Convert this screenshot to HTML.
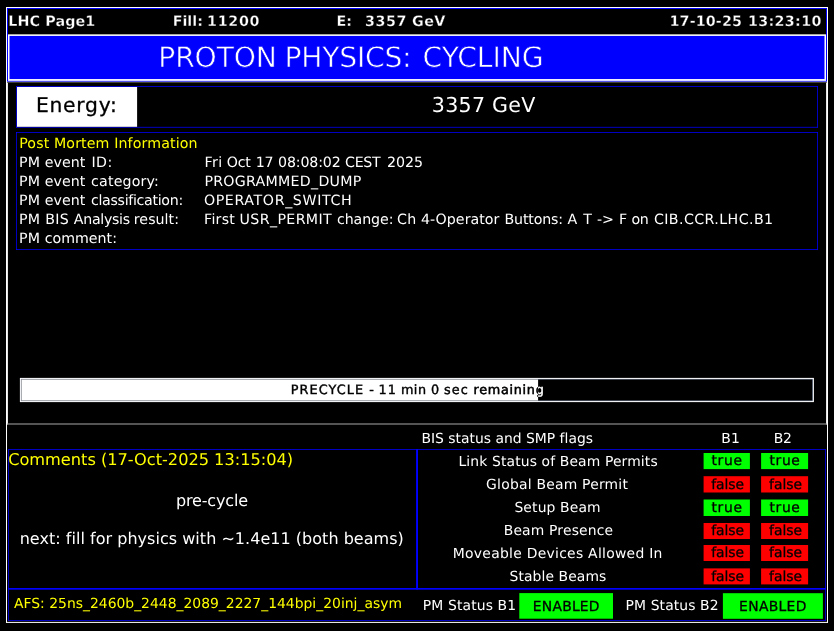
<!DOCTYPE html>
<html><head><meta charset="utf-8"><title>LHC Page1</title>
<style>
html,body{margin:0;padding:0;background:#000;}
body{width:834px;height:631px;position:relative;overflow:hidden;font-family:"DejaVu Sans","Liberation Sans",sans-serif;color:#fff;text-rendering:geometricPrecision;}
#w{position:absolute;left:0;top:0;width:834px;height:631px;will-change:transform;overflow:hidden;}
.a{position:absolute;white-space:pre;line-height:1;}
.row{height:0;font-size:0;line-height:0;}
</style></head><body><div id="w">
<svg width="834" height="631" viewBox="0 0 834 631" style="position:absolute;left:0;top:0">
<!-- outer frame -->
<rect x="6" y="7" width="822" height="1" fill="#fff"/>
<rect x="6" y="621.9" width="822" height="1" fill="#fff"/>
<rect x="6" y="7" width="1" height="615.9" fill="#fff"/>
<rect x="827" y="7" width="1" height="615.9" fill="#fff"/>
<!-- header panel -->
<rect x="7" y="8" width="820" height="1" fill="#0000ff"/>
<rect x="7" y="8" width="1" height="74" fill="#0000ff"/>
<rect x="826" y="8" width="1" height="74" fill="#0000ff"/>
<rect x="8" y="34" width="818" height="1" fill="#aaaaa0"/>
<rect x="8" y="35" width="818" height="1" fill="#ececff"/>
<rect x="8" y="36" width="818" height="43" fill="#0000ff"/>
<rect x="8" y="35" width="1" height="46" fill="#fff"/>
<rect x="825" y="35" width="1" height="46" fill="#fff"/>
<rect x="9" y="36" width="1" height="43" fill="#8080ff"/>
<rect x="824" y="36" width="1" height="43" fill="#8080ff"/>
<rect x="8" y="79" width="818" height="1" fill="#f0f0ff"/>
<rect x="8" y="80" width="818" height="1" fill="#d8d8ff"/>
<rect x="7" y="81" width="820" height="1" fill="#5555ee"/>
<rect x="8" y="82" width="818" height="1" fill="#404038"/>
<!-- main panel side lines -->
<rect x="7" y="82.5" width="0.9" height="342" fill="#fff"/>
<rect x="826.1" y="82.5" width="0.9" height="342" fill="#fff"/>
<!-- energy box -->
<rect x="16.1" y="86.12" width="801.85" height="0.76" fill="#0000ff"/>
<rect x="16.1" y="126.87" width="801.85" height="0.76" fill="#0000ff"/>
<rect x="16.12" y="86.1" width="0.76" height="41.55" fill="#0000ff"/>
<rect x="817.17" y="86.1" width="0.76" height="41.55" fill="#0000ff"/>
<rect x="17" y="87" width="120.1" height="39.8" fill="#fff"/>
<!-- post mortem box -->
<rect x="16.1" y="132.02" width="801.85" height="0.76" fill="#0000ff"/>
<rect x="16.1" y="249.22" width="801.85" height="0.76" fill="#0000ff"/>
<rect x="16.12" y="132" width="0.76" height="118" fill="#0000ff"/>
<rect x="817.17" y="132" width="0.76" height="118" fill="#0000ff"/>
<!-- progress bar -->
<rect x="19.9" y="377.9" width="794" height="24.2" fill="#fff"/>
<rect x="20.85" y="378.85" width="792.1" height="22.3" fill="#8e9cb6"/>
<rect x="21.45" y="379.45" width="790.9" height="21.1" fill="#000"/>
<rect x="21.45" y="379.45" width="516.65" height="21.1" fill="#fff"/>
<!-- separator -->
<rect x="7" y="423.5" width="820" height="1" fill="#a8a8a8"/>
<!-- bottom panels -->
<rect x="8.2" y="449.22" width="817.6" height="0.76" fill="#0000ff"/>
<rect x="8.22" y="449.2" width="0.76" height="171.7" fill="#0000ff"/>
<rect x="825.02" y="449.2" width="0.76" height="171.7" fill="#0000ff"/>
<rect x="416.1" y="449.2" width="1.9" height="140.3" fill="#0000ff"/>
<rect x="8.2" y="588" width="817.6" height="1.7" fill="#0000ff"/>
<rect x="8.2" y="620.12" width="817.6" height="0.76" fill="#0000ff"/>
<!-- flag boxes -->
<rect x="703.6" y="453" width="46.3" height="16.1" fill="#00ff00"/>
<rect x="761.1" y="453" width="47" height="16.1" fill="#00ff00"/>
<rect x="703.6" y="476.2" width="46.3" height="16.3" fill="#ff0000"/>
<rect x="761.1" y="476.2" width="47" height="16.3" fill="#ff0000"/>
<rect x="703.6" y="499.5" width="46.3" height="16.5" fill="#00ff00"/>
<rect x="761.1" y="499.5" width="47" height="16.5" fill="#00ff00"/>
<rect x="703.6" y="523" width="46.3" height="16" fill="#ff0000"/>
<rect x="761.1" y="523" width="47" height="16" fill="#ff0000"/>
<rect x="703.6" y="545" width="46.3" height="16" fill="#ff0000"/>
<rect x="761.1" y="545" width="47" height="16" fill="#ff0000"/>
<rect x="703.6" y="568.4" width="46.3" height="16" fill="#ff0000"/>
<rect x="761.1" y="568.4" width="47" height="16" fill="#ff0000"/>
<!-- PM status boxes -->
<rect x="519.3" y="593.1" width="93.7" height="25.6" fill="#00ff00"/>
<rect x="722.9" y="593.2" width="100" height="25.6" fill="#00ff00"/>
</svg>
<!-- text -->
<div class="a" style="left:8.3px;top:15px;font-size:14.3px;font-weight:bold;letter-spacing:0.091px;-webkit-text-stroke:0.3px #000;">LHC Page1</div>
<div class="row"><span class="a" style="left:172.7px;top:15px;font-size:14.3px;font-weight:bold;-webkit-text-stroke:0.3px #000;">Fill:</span> <span class="a" style="left:207.1px;top:15px;font-size:14.3px;font-weight:bold;letter-spacing:0.66px;-webkit-text-stroke:0.3px #000;">11200</span></div>
<div class="row"><span class="a" style="left:336.6px;top:15px;font-size:14.3px;font-weight:bold;letter-spacing:-0.1px;-webkit-text-stroke:0.3px #000;">E:</span> <span class="a" style="left:364.9px;top:15px;font-size:14.3px;font-weight:bold;letter-spacing:0.606px;-webkit-text-stroke:0.3px #000;">3357</span> <span class="a" style="left:412.1px;top:15px;font-size:14.3px;font-weight:bold;letter-spacing:0.4px;-webkit-text-stroke:0.3px #000;">GeV</span></div>
<div class="row"><span class="a" style="left:669.5px;top:15px;font-size:14.3px;font-weight:bold;letter-spacing:0.128px;-webkit-text-stroke:0.3px #000;">17-10-25</span> <span class="a" style="left:748.0px;top:15px;font-size:14.3px;font-weight:bold;letter-spacing:0.323px;-webkit-text-stroke:0.3px #000;">13:23:10</span></div>
<div class="row"><span class="a" style="left:158.3px;top:44px;font-size:28.2px;letter-spacing:-0.128px;-webkit-text-stroke:0.6px #0000ff;">PROTON</span> <span class="a" style="left:284.6px;top:44px;font-size:28.2px;letter-spacing:-0.249px;-webkit-text-stroke:0.6px #0000ff;">PHYSICS:</span> <span class="a" style="left:422.5px;top:44px;font-size:28.2px;letter-spacing:-0.06px;-webkit-text-stroke:0.6px #0000ff;">CYCLING</span></div>
<div class="a" style="left:36.0px;top:95px;font-size:20.3px;color:#000000;letter-spacing:0.727px;-webkit-text-stroke:0.3px #000;">Energy:</div>
<div class="a" style="left:431.8px;top:95px;font-size:20.6px;letter-spacing:0.26px;">3357 GeV</div>
<div class="a" style="left:19.2px;top:137px;font-size:14.2px;color:#ffff00;letter-spacing:0.119px;">Post Mortem Information</div>
<div class="row"><span class="a" style="left:19.1px;top:156px;font-size:14.2px;">PM</span> <span class="a" style="left:44.7px;top:156px;font-size:14.2px;letter-spacing:0.07px;">event</span> <span class="a" style="left:91.5px;top:156px;font-size:14.2px;letter-spacing:0.4px;">ID:</span></div>
<div class="row"><span class="a" style="left:19.1px;top:175px;font-size:14.2px;">PM</span> <span class="a" style="left:44.7px;top:175px;font-size:14.2px;letter-spacing:0.07px;">event</span> <span class="a" style="left:91.1px;top:175px;font-size:14.2px;letter-spacing:0.17px;">category:</span></div>
<div class="row"><span class="a" style="left:19.1px;top:194px;font-size:14.2px;">PM</span> <span class="a" style="left:44.7px;top:194px;font-size:14.2px;letter-spacing:0.07px;">event</span> <span class="a" style="left:91.0px;top:194px;font-size:14.2px;letter-spacing:-0.311px;">classification:</span></div>
<div class="row"><span class="a" style="left:19.1px;top:213px;font-size:14.2px;">PM</span> <span class="a" style="left:45.2px;top:213px;font-size:14.2px;letter-spacing:0.3px;">BIS</span> <span class="a" style="left:73.8px;top:213px;font-size:14.2px;letter-spacing:-0.3px;">Analysis</span> <span class="a" style="left:133.8px;top:213px;font-size:14.2px;letter-spacing:0.043px;">result:</span></div>
<div class="row"><span class="a" style="left:19.1px;top:232px;font-size:14.2px;">PM</span> <span class="a" style="left:44.7px;top:232px;font-size:14.2px;letter-spacing:0.012px;">comment:</span></div>
<div class="row"><span class="a" style="left:204.6px;top:156px;font-size:14.2px;letter-spacing:0.4px;">Fri</span> <span class="a" style="left:226.8px;top:156px;font-size:14.2px;letter-spacing:-0.2px;">Oct</span> <span class="a" style="left:255.8px;top:156px;font-size:14.2px;letter-spacing:-0.2px;">17</span> <span class="a" style="left:278.1px;top:156px;font-size:14.2px;letter-spacing:-0.157px;">08:08:02</span> <span class="a" style="left:345.1px;top:156px;font-size:14.2px;letter-spacing:-0.333px;">CEST</span> <span class="a" style="left:387.1px;top:156px;font-size:14.2px;letter-spacing:-0.034px;">2025</span></div>
<div class="a" style="left:204.4px;top:175px;font-size:14.2px;letter-spacing:0.273px;">PROGRAMMED_DUMP</div>
<div class="a" style="left:203.9px;top:194px;font-size:14.2px;letter-spacing:0.623px;">OPERATOR_SWITCH</div>
<div class="row"><span class="a" style="left:204.1px;top:213px;font-size:14.2px;letter-spacing:0.225px;">First</span> <span class="a" style="left:239.6px;top:213px;font-size:14.2px;letter-spacing:0.364px;">USR_PERMIT</span> <span class="a" style="left:336.9px;top:213px;font-size:14.2px;letter-spacing:-0.063px;">change:</span> <span class="a" style="left:397.0px;top:213px;font-size:14.2px;letter-spacing:0.3px;">Ch</span> <span class="a" style="left:421.0px;top:213px;font-size:14.2px;letter-spacing:0.04px;">4-Operator</span> <span class="a" style="left:504.5px;top:213px;font-size:14.2px;letter-spacing:-0.168px;">Buttons:</span> <span class="a" style="left:567.4px;top:213px;font-size:14.2px;">A</span> <span class="a" style="left:583.2px;top:213px;font-size:14.2px;">T</span> <span class="a" style="left:597.0px;top:213px;font-size:14.2px;letter-spacing:-0.2px;">-&gt;</span> <span class="a" style="left:619.1px;top:213px;font-size:14.2px;">F</span> <span class="a" style="left:631.4px;top:213px;font-size:14.2px;letter-spacing:-0.2px;">on</span> <span class="a" style="left:653.9px;top:213px;font-size:14.2px;letter-spacing:0.418px;">CIB.CCR.LHC.B1</span></div>
<div class="a" style="left:421.4px;top:433px;font-size:13.9px;letter-spacing:0.007px;">BIS status and SMP flags</div>
<div class="a" style="left:721.2px;top:433px;font-size:13.9px;letter-spacing:0.4px;">B1</div>
<div class="a" style="left:773.7px;top:433px;font-size:13.9px;letter-spacing:-0.2px;">B2</div>
<div class="a" style="left:8.2px;top:452px;font-size:16.2px;color:#ffff00;letter-spacing:-0.015px;">Comments (17-Oct-2025 13:15:04)</div>
<div class="a" style="left:175.9px;top:493px;font-size:16.0px;letter-spacing:-0.147px;">pre-cycle</div>
<div class="a" style="left:19.7px;top:531px;font-size:16.0px;letter-spacing:0.031px;">next: fill for physics with ~1.4e11 (both beams)</div>
<div class="a" style="left:458.5px;top:456px;font-size:13.9px;letter-spacing:0.126px;">Link Status of Beam Permits</div>
<div class="a" style="left:486.1px;top:479px;font-size:13.9px;letter-spacing:0.224px;">Global Beam Permit</div>
<div class="a" style="left:514.4px;top:502px;font-size:13.9px;letter-spacing:0.142px;">Setup Beam</div>
<div class="a" style="left:503.7px;top:525px;font-size:13.9px;letter-spacing:0.167px;">Beam Presence</div>
<div class="a" style="left:452.8px;top:548px;font-size:13.9px;letter-spacing:0.28px;">Moveable Devices Allowed In</div>
<div class="a" style="left:509.5px;top:571px;font-size:13.9px;letter-spacing:0.091px;">Stable Beams</div>
<div class="a" style="left:14.0px;top:598px;font-size:13.9px;color:#ffff00;letter-spacing:0.011px;">AFS: 25ns_2460b_2448_2089_2227_144bpi_20inj_asym</div>
<div class="a" style="left:422.8px;top:600px;font-size:13.9px;letter-spacing:0.131px;">PM Status B1</div>
<div class="a" style="left:625.6px;top:600px;font-size:13.9px;letter-spacing:0.099px;">PM Status B2</div>
<div class="a" style="left:532.8px;top:601px;font-size:13.9px;color:#000000;letter-spacing:0.227px;-webkit-text-stroke:0.3px #000;">ENABLED</div>
<div class="a" style="left:739.1px;top:601px;font-size:13.9px;color:#000000;letter-spacing:0.317px;-webkit-text-stroke:0.3px #000;">ENABLED</div>
<div class="row"><span class="a" style="left:290.7px;top:385px;font-size:12.8px;color:#000000;letter-spacing:1.091px;-webkit-text-stroke:0.4px currentColor;">PRECYCLE</span> <span class="a" style="left:369.2px;top:385px;font-size:12.8px;color:#000000;-webkit-text-stroke:0.4px currentColor;">-</span> <span class="a" style="left:378.6px;top:385px;font-size:12.8px;color:#000000;letter-spacing:1.1px;-webkit-text-stroke:0.4px currentColor;">11</span> <span class="a" style="left:400.9px;top:385px;font-size:12.8px;color:#000000;letter-spacing:0.5px;-webkit-text-stroke:0.4px currentColor;">min</span> <span class="a" style="left:431.0px;top:385px;font-size:12.8px;color:#000000;-webkit-text-stroke:0.4px currentColor;">0</span> <span class="a" style="left:443.9px;top:385px;font-size:12.8px;color:#000000;letter-spacing:1.2px;-webkit-text-stroke:0.4px currentColor;">sec</span> <span class="a" style="left:473.6px;top:385px;font-size:12.8px;letter-spacing:0.693px;-webkit-text-stroke:0.4px currentColor;mix-blend-mode:difference;">remaining</span></div>
<div class="a" style="left:711.5px;top:455px;font-size:13.9px;color:#000000;letter-spacing:0.667px;-webkit-text-stroke:0.3px #000;">true</div>
<div class="a" style="left:769.4px;top:455px;font-size:13.9px;color:#000000;letter-spacing:0.667px;-webkit-text-stroke:0.3px #000;">true</div>
<div class="a" style="left:711.2px;top:479px;font-size:13.9px;color:#000000;letter-spacing:-0.045px;-webkit-text-stroke:0.3px #000;">false</div>
<div class="a" style="left:769.1px;top:479px;font-size:13.9px;color:#000000;letter-spacing:-0.045px;-webkit-text-stroke:0.3px #000;">false</div>
<div class="a" style="left:711.5px;top:502px;font-size:13.9px;color:#000000;letter-spacing:0.667px;-webkit-text-stroke:0.3px #000;">true</div>
<div class="a" style="left:769.4px;top:502px;font-size:13.9px;color:#000000;letter-spacing:0.667px;-webkit-text-stroke:0.3px #000;">true</div>
<div class="a" style="left:711.2px;top:525px;font-size:13.9px;color:#000000;letter-spacing:-0.045px;-webkit-text-stroke:0.3px #000;">false</div>
<div class="a" style="left:769.1px;top:525px;font-size:13.9px;color:#000000;letter-spacing:-0.045px;-webkit-text-stroke:0.3px #000;">false</div>
<div class="a" style="left:711.2px;top:547px;font-size:13.9px;color:#000000;letter-spacing:-0.045px;-webkit-text-stroke:0.3px #000;">false</div>
<div class="a" style="left:769.1px;top:547px;font-size:13.9px;color:#000000;letter-spacing:-0.045px;-webkit-text-stroke:0.3px #000;">false</div>
<div class="a" style="left:711.2px;top:571px;font-size:13.9px;color:#000000;letter-spacing:-0.045px;-webkit-text-stroke:0.3px #000;">false</div>
<div class="a" style="left:769.1px;top:571px;font-size:13.9px;color:#000000;letter-spacing:-0.045px;-webkit-text-stroke:0.3px #000;">false</div>

</div></body></html>
